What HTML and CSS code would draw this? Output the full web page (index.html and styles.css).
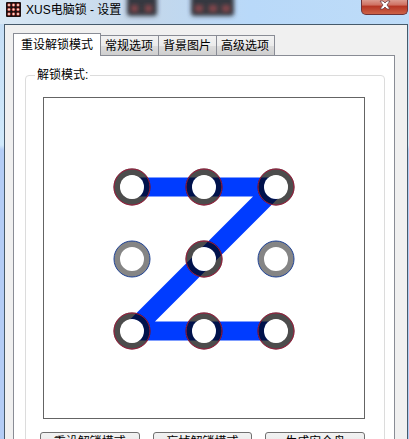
FILE: index.html
```html
<!DOCTYPE html>
<html lang="zh-CN">
<head>
    <meta charset="UTF-8">
    <meta name="viewport" content="width=device-width, initial-scale=1.0">
    <title>XUS电脑锁 - 设置</title>
    <link rel="stylesheet" href="styles.css">
</head>
<body>
    <div class="window">
        <header class="titlebar">
            <svg class="app-icon" width="15" height="15" viewBox="0 0 15 15" aria-hidden="true">
                <rect width="15" height="15" rx="1" fill="#1c1012"/>
                <g fill="#c8453f">
                    <circle cx="3" cy="3" r="1.7"/><circle cx="7.5" cy="3" r="1.7"/><circle cx="12" cy="3" r="1.7"/>
                    <circle cx="3" cy="7.5" r="1.7"/><circle cx="7.5" cy="7.5" r="1.7"/><circle cx="12" cy="7.5" r="1.7"/>
                    <circle cx="3" cy="12" r="1.7"/><circle cx="7.5" cy="12" r="1.7"/><circle cx="12" cy="12" r="1.7"/>
                </g>
                <g fill="#f8e2d6">
                    <circle cx="3" cy="3" r="1"/><circle cx="7.5" cy="3" r="1"/><circle cx="12" cy="3" r="1"/>
                    <circle cx="3" cy="7.5" r="1"/><circle cx="7.5" cy="7.5" r="1"/><circle cx="12" cy="7.5" r="1"/>
                    <circle cx="3" cy="12" r="1"/><circle cx="7.5" cy="12" r="1"/><circle cx="12" cy="12" r="1"/>
                </g>
            </svg>
            <h1 class="title">XUS电脑锁 - 设置</h1>
            <!-- desktop icons showing through the glass -->
            <svg class="glass" width="120" height="24" viewBox="0 0 120 24" aria-hidden="true">
                <defs>
                    <filter id="soft" x="-20%" y="-40%" width="140%" height="180%"><feGaussianBlur stdDeviation="2"/></filter>
                </defs>
                <g filter="url(#soft)">
                    <rect x="6" y="-6" width="30" height="22" rx="3" fill="#34383f"/>
                    <rect x="70" y="-6" width="43" height="22" rx="3" fill="#34383f"/>
                </g>
                <g filter="url(#soft)" fill="#85464c">
                    <rect x="10" y="5" width="7" height="7"/><rect x="24" y="5" width="7" height="7"/>
                    <rect x="74" y="5" width="8" height="7"/><rect x="88" y="5" width="8" height="7"/><rect x="101" y="5" width="8" height="7"/>
                </g>
            </svg>
            <button class="close" type="button" aria-label="关闭">
                <svg width="12" height="10" viewBox="0 0 12 10" aria-hidden="true">
                    <path d="M1 1h3l2 2 2-2h3L8 5l3 4H8L6 7 4 9H1l3-4z" fill="#fff" stroke="#6d3c42" stroke-width=".8"/>
                </svg>
            </button>
        </header>

        <main class="client">
            <nav class="tabs" role="tablist">
                <button class="tab active" type="button" role="tab" aria-selected="true">重设解锁模式</button>
                <button class="tab" type="button" role="tab" aria-selected="false">常规选项</button>
                <button class="tab" type="button" role="tab" aria-selected="false">背景图片</button>
                <button class="tab" type="button" role="tab" aria-selected="false">高级选项</button>
            </nav>
            <section class="page">
                <fieldset class="group">
                    <legend>解锁模式:</legend>
                    <div class="pattern">
                        <svg class="dots" viewBox="0 0 320 320" aria-hidden="true">
                            <path d="M88 89H232L88 233H232" fill="none" stroke="#003cff" stroke-width="19" stroke-linejoin="round"/>
                            <g fill="none" stroke="#000" stroke-opacity=".7" stroke-width="7">
                                <circle cx="88" cy="89" r="15"/><circle cx="160" cy="89" r="15"/><circle cx="232" cy="89" r="15"/>
                                <circle cx="160" cy="161" r="15"/>
                                <circle cx="88" cy="233" r="15"/><circle cx="160" cy="233" r="15"/><circle cx="232" cy="233" r="15"/>
                            </g>
                            <g fill="none" stroke="#a21b3c" stroke-width="1">
                                <circle cx="88" cy="89" r="18"/><circle cx="160" cy="89" r="18"/><circle cx="232" cy="89" r="18"/>
                                <circle cx="160" cy="161" r="18"/>
                                <circle cx="88" cy="233" r="18"/><circle cx="160" cy="233" r="18"/><circle cx="232" cy="233" r="18"/>
                            </g>
                            <g fill="#fff">
                                <circle cx="88" cy="89" r="12"/><circle cx="160" cy="89" r="12"/><circle cx="232" cy="89" r="12"/>
                                <circle cx="160" cy="161" r="12"/>
                                <circle cx="88" cy="233" r="12"/><circle cx="160" cy="233" r="12"/><circle cx="232" cy="233" r="12"/>
                            </g>
                            <g fill="#fff" stroke="#858585" stroke-width="6">
                                <circle cx="88" cy="161" r="15"/><circle cx="232" cy="161" r="15"/>
                            </g>
                            <g fill="none" stroke="#1f4396" stroke-width="1">
                                <circle cx="88" cy="161" r="18"/><circle cx="232" cy="161" r="18"/>
                            </g>
                        </svg>
                    </div>
                    <div class="actions">
                        <button type="button">重设解锁模式</button>
                        <button type="button">忘掉解锁模式</button>
                        <button type="button">生成安全盘</button>
                    </div>
                </fieldset>
            </section>
        </main>
    </div>
</body>
</html>
```

FILE: styles.css
```css
* {
    box-sizing: border-box;
}

body {
    margin: 0;
    height: 100vh;
    overflow: hidden;
    font-family: "Liberation Sans", "Noto Sans CJK SC", sans-serif;
    font-size: 12px;
    color: #000;
}

button {
    font: inherit;
    color: inherit;
    margin: 0;
}

.window {
    min-height: 100%;
    padding: 0 1px 0 4px;
    background: linear-gradient(to bottom, #c3dcf5 0, #d0e9fb 145px, #b3ccf5 150px, #b3ccf5 100%);
}

.titlebar {
    display: flex;
    align-items: flex-start;
    height: 24px;
    margin: 0 -1px 0 -4px;
    padding: 2px 1px 0 6px;
    background: linear-gradient(to right, #d9e8f5 0, #c4d7ea 140px, #b9d9f9 250px, #bedcf8 100%);
}

.title {
    margin: 0 0 0 5px;
    font-size: 12px;
    line-height: 16px;
    font-weight: normal;
    white-space: nowrap;
}

.glass {
    flex: none;
    margin-top: -2px;
}

.close {
    display: flex;
    justify-content: center;
    align-items: flex-start;
    width: 47px;
    height: 15px;
    margin: -2px 0 0 auto;
    padding: 0;
    border: 1px solid #6d3338;
    border-top: 0;
    border-radius: 0 0 5px 5px;
    background: linear-gradient(to bottom, #dc9b8f 0, #cf7162 35%, #b63624 45%, #cc6247 100%);
}

.client {
    padding: 8px 12px 0 8px;
    background: #f0f0f0;
    border: 1px solid #465a6b;
    border-bottom: 0;
}

.tabs {
    display: flex;
    align-items: flex-end;
}

.tab {
    height: 20px;
    padding: 0 5px 0 4px;
    line-height: 20px;
    white-space: nowrap;
    border: 1px solid #898c95;
    border-left-width: 0;
    border-bottom: 0;
    background: linear-gradient(to bottom, #f2f2f2 0, #ebebeb 50%, #dddddd 51%, #cfcfcf 100%);
}

.tab.active {
    position: relative;
    height: 23px;
    padding: 0 7px;
    margin-bottom: -1px;
    border-left-width: 1px;
    background: #fff;
}

.page {
    padding: 10px 9px 0 11px;
    background: #fff;
    border: 1px solid #898c95;
    border-bottom: 0;
}

.group {
    min-width: 0;
    margin: 0;
    padding: 13px 19px 30px 17px;
    border: 1px solid #dcdcdc;
    border-radius: 4px;
}

.group legend {
    margin-left: -8px;
    padding: 0 2px;
    line-height: 18px;
}

.pattern {
    border: 1px solid #646464;
    background: #fff;
}

.dots {
    display: block;
    width: 100%;
}

.actions {
    display: grid;
    grid-template-columns: 1fr 1fr 1fr;
    gap: 13px;
    margin: 13px 0 0 -3px;
}

.actions button {
    height: 20px;
    padding: 0;
    line-height: 16px;
    border: 1px solid #707070;
    border-radius: 3px;
    background: linear-gradient(to bottom, #f2f2f2 0, #ebebeb 50%, #dddddd 51%, #cfcfcf 100%);
    white-space: nowrap;
}
```
